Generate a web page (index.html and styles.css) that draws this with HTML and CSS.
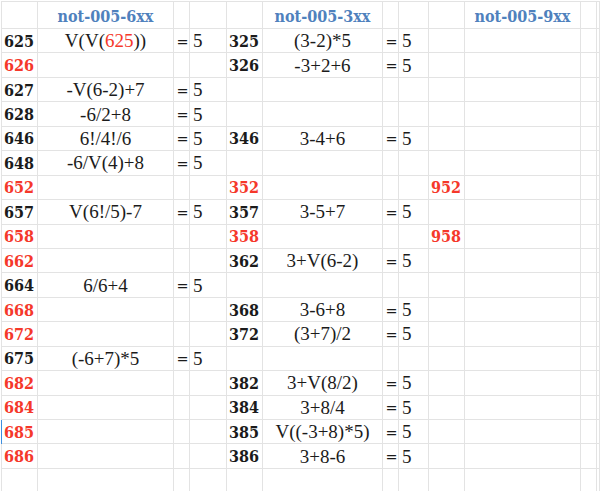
FILE: index.html
```html
<!DOCTYPE html>
<html>
<head>
<meta charset="utf-8">
<link rel="stylesheet" href="styles.css">
</head>
<body>
<div class="sheet">
  <div class="row head">
    <div class="c"></div><div class="c h">not-005-6xx</div><div class="c"></div><div class="c"></div>
    <div class="c"></div><div class="c h">not-005-3xx</div><div class="c"></div><div class="c"></div>
    <div class="c"></div><div class="c h">not-005-9xx</div><div class="c"></div><div class="c"></div>
  </div>
  <div class="row">
    <div class="c n">625</div><div class="c f">V(V(<span class="red">625</span>))</div><div class="c eq">=</div><div class="c v">5</div>
    <div class="c n">325</div><div class="c f">(3-2)*5</div><div class="c eq">=</div><div class="c v">5</div>
    <div class="c"></div><div class="c"></div><div class="c"></div><div class="c"></div>
  </div>
  <div class="row">
    <div class="c n red">626</div><div class="c f"></div><div class="c eq"></div><div class="c v"></div>
    <div class="c n">326</div><div class="c f">-3+2+6</div><div class="c eq">=</div><div class="c v">5</div>
    <div class="c"></div><div class="c"></div><div class="c"></div><div class="c"></div>
  </div>
  <div class="row">
    <div class="c n">627</div><div class="c f">-V(6-2)+7</div><div class="c eq">=</div><div class="c v">5</div>
    <div class="c"></div><div class="c"></div><div class="c"></div><div class="c"></div>
    <div class="c"></div><div class="c"></div><div class="c"></div><div class="c"></div>
  </div>
  <div class="row">
    <div class="c n">628</div><div class="c f">-6/2+8</div><div class="c eq">=</div><div class="c v">5</div>
    <div class="c"></div><div class="c"></div><div class="c"></div><div class="c"></div>
    <div class="c"></div><div class="c"></div><div class="c"></div><div class="c"></div>
  </div>
  <div class="row">
    <div class="c n">646</div><div class="c f">6!/4!/6</div><div class="c eq">=</div><div class="c v">5</div>
    <div class="c n">346</div><div class="c f">3-4+6</div><div class="c eq">=</div><div class="c v">5</div>
    <div class="c"></div><div class="c"></div><div class="c"></div><div class="c"></div>
  </div>
  <div class="row">
    <div class="c n">648</div><div class="c f">-6/V(4)+8</div><div class="c eq">=</div><div class="c v">5</div>
    <div class="c"></div><div class="c"></div><div class="c"></div><div class="c"></div>
    <div class="c"></div><div class="c"></div><div class="c"></div><div class="c"></div>
  </div>
  <div class="row">
    <div class="c n red">652</div><div class="c"></div><div class="c"></div><div class="c"></div>
    <div class="c n red">352</div><div class="c"></div><div class="c"></div><div class="c"></div>
    <div class="c n red">952</div><div class="c"></div><div class="c"></div><div class="c"></div>
  </div>
  <div class="row">
    <div class="c n">657</div><div class="c f">V(6!/5)-7</div><div class="c eq">=</div><div class="c v">5</div>
    <div class="c n">357</div><div class="c f">3-5+7</div><div class="c eq">=</div><div class="c v">5</div>
    <div class="c"></div><div class="c"></div><div class="c"></div><div class="c"></div>
  </div>
  <div class="row">
    <div class="c n red">658</div><div class="c"></div><div class="c"></div><div class="c"></div>
    <div class="c n red">358</div><div class="c"></div><div class="c"></div><div class="c"></div>
    <div class="c n red">958</div><div class="c"></div><div class="c"></div><div class="c"></div>
  </div>
  <div class="row">
    <div class="c n red">662</div><div class="c"></div><div class="c"></div><div class="c"></div>
    <div class="c n">362</div><div class="c f">3+V(6-2)</div><div class="c eq">=</div><div class="c v">5</div>
    <div class="c"></div><div class="c"></div><div class="c"></div><div class="c"></div>
  </div>
  <div class="row">
    <div class="c n">664</div><div class="c f">6/6+4</div><div class="c eq">=</div><div class="c v">5</div>
    <div class="c"></div><div class="c"></div><div class="c"></div><div class="c"></div>
    <div class="c"></div><div class="c"></div><div class="c"></div><div class="c"></div>
  </div>
  <div class="row">
    <div class="c n red">668</div><div class="c"></div><div class="c"></div><div class="c"></div>
    <div class="c n">368</div><div class="c f">3-6+8</div><div class="c eq">=</div><div class="c v">5</div>
    <div class="c"></div><div class="c"></div><div class="c"></div><div class="c"></div>
  </div>
  <div class="row">
    <div class="c n red">672</div><div class="c"></div><div class="c"></div><div class="c"></div>
    <div class="c n">372</div><div class="c f">(3+7)/2</div><div class="c eq">=</div><div class="c v">5</div>
    <div class="c"></div><div class="c"></div><div class="c"></div><div class="c"></div>
  </div>
  <div class="row">
    <div class="c n">675</div><div class="c f">(-6+7)*5</div><div class="c eq">=</div><div class="c v">5</div>
    <div class="c"></div><div class="c"></div><div class="c"></div><div class="c"></div>
    <div class="c"></div><div class="c"></div><div class="c"></div><div class="c"></div>
  </div>
  <div class="row">
    <div class="c n red">682</div><div class="c"></div><div class="c"></div><div class="c"></div>
    <div class="c n">382</div><div class="c f">3+V(8/2)</div><div class="c eq">=</div><div class="c v">5</div>
    <div class="c"></div><div class="c"></div><div class="c"></div><div class="c"></div>
  </div>
  <div class="row">
    <div class="c n red">684</div><div class="c"></div><div class="c"></div><div class="c"></div>
    <div class="c n">384</div><div class="c f">3+8/4</div><div class="c eq">=</div><div class="c v">5</div>
    <div class="c"></div><div class="c"></div><div class="c"></div><div class="c"></div>
  </div>
  <div class="row sel">
    <div class="c n red">685</div><div class="c"></div><div class="c"></div><div class="c"></div>
    <div class="c n">385</div><div class="c f">V((-3+8)*5)</div><div class="c eq">=</div><div class="c v">5</div>
    <div class="c"></div><div class="c"></div><div class="c"></div><div class="c"></div>
  </div>
  <div class="row">
    <div class="c n red">686</div><div class="c"></div><div class="c"></div><div class="c"></div>
    <div class="c n">386</div><div class="c f">3+8-6</div><div class="c eq">=</div><div class="c v">5</div>
    <div class="c"></div><div class="c"></div><div class="c"></div><div class="c"></div>
  </div>
  <div class="row">
    <div class="c"></div><div class="c"></div><div class="c"></div><div class="c"></div>
    <div class="c"></div><div class="c"></div><div class="c"></div><div class="c"></div>
    <div class="c"></div><div class="c"></div><div class="c"></div><div class="c"></div>
  </div>
</div>
</body>
</html>
```

FILE: styles.css
```css
html, body {
  margin: 0;
  padding: 0;
  background: #ffffff;
  overflow: hidden;
}

.sheet {
  margin: 1px 0 0 1px;
  border-top: 1px solid #e3e3e3;
  border-left: 1px solid #e3e3e3;
}

.row {
  display: grid;
  grid-template-columns: 36px 136px 16px 37px 36px 120px 16px 30px 36px 116px 16px 1fr;
  height: 24.45px;
}

.row.head {
  height: 27px;
}

.c {
  box-sizing: border-box;
  border-right: 1px solid #e3e3e3;
  border-bottom: 1px solid #e3e3e3;
  display: flex;
  align-items: center;
  white-space: nowrap;
  overflow: visible;
  color: #1b1b1b;
  min-width: 0;
}

.h {
  justify-content: center;
  font-family: "DejaVu Serif", serif;
  font-stretch: condensed;
  font-weight: bold;
  font-size: 16px;
  color: #4f81bd;
  padding-top: 2px;
}

.n {
  font-family: "DejaVu Serif", serif;
  font-stretch: condensed;
  font-weight: bold;
  font-size: 16px;
  padding-left: 2px;
  padding-top: 1px;
}

.f {
  justify-content: center;
  font-family: "Liberation Serif", serif;
  font-size: 19px;
  padding-top: 1px;
}

.eq {
  justify-content: center;
  font-family: "DejaVu Serif", serif;
  font-stretch: condensed;
  font-size: 16px;
  padding-top: 1px;
  padding-left: 2px;
}

.v {
  font-family: "Liberation Serif", serif;
  font-size: 19px;
  padding-left: 3px;
  padding-top: 1px;
}

.red {
  color: #f5382a;
}

.sel .c:first-child {
  box-shadow: -1px 0 0 #3d8fe0;
}
```
